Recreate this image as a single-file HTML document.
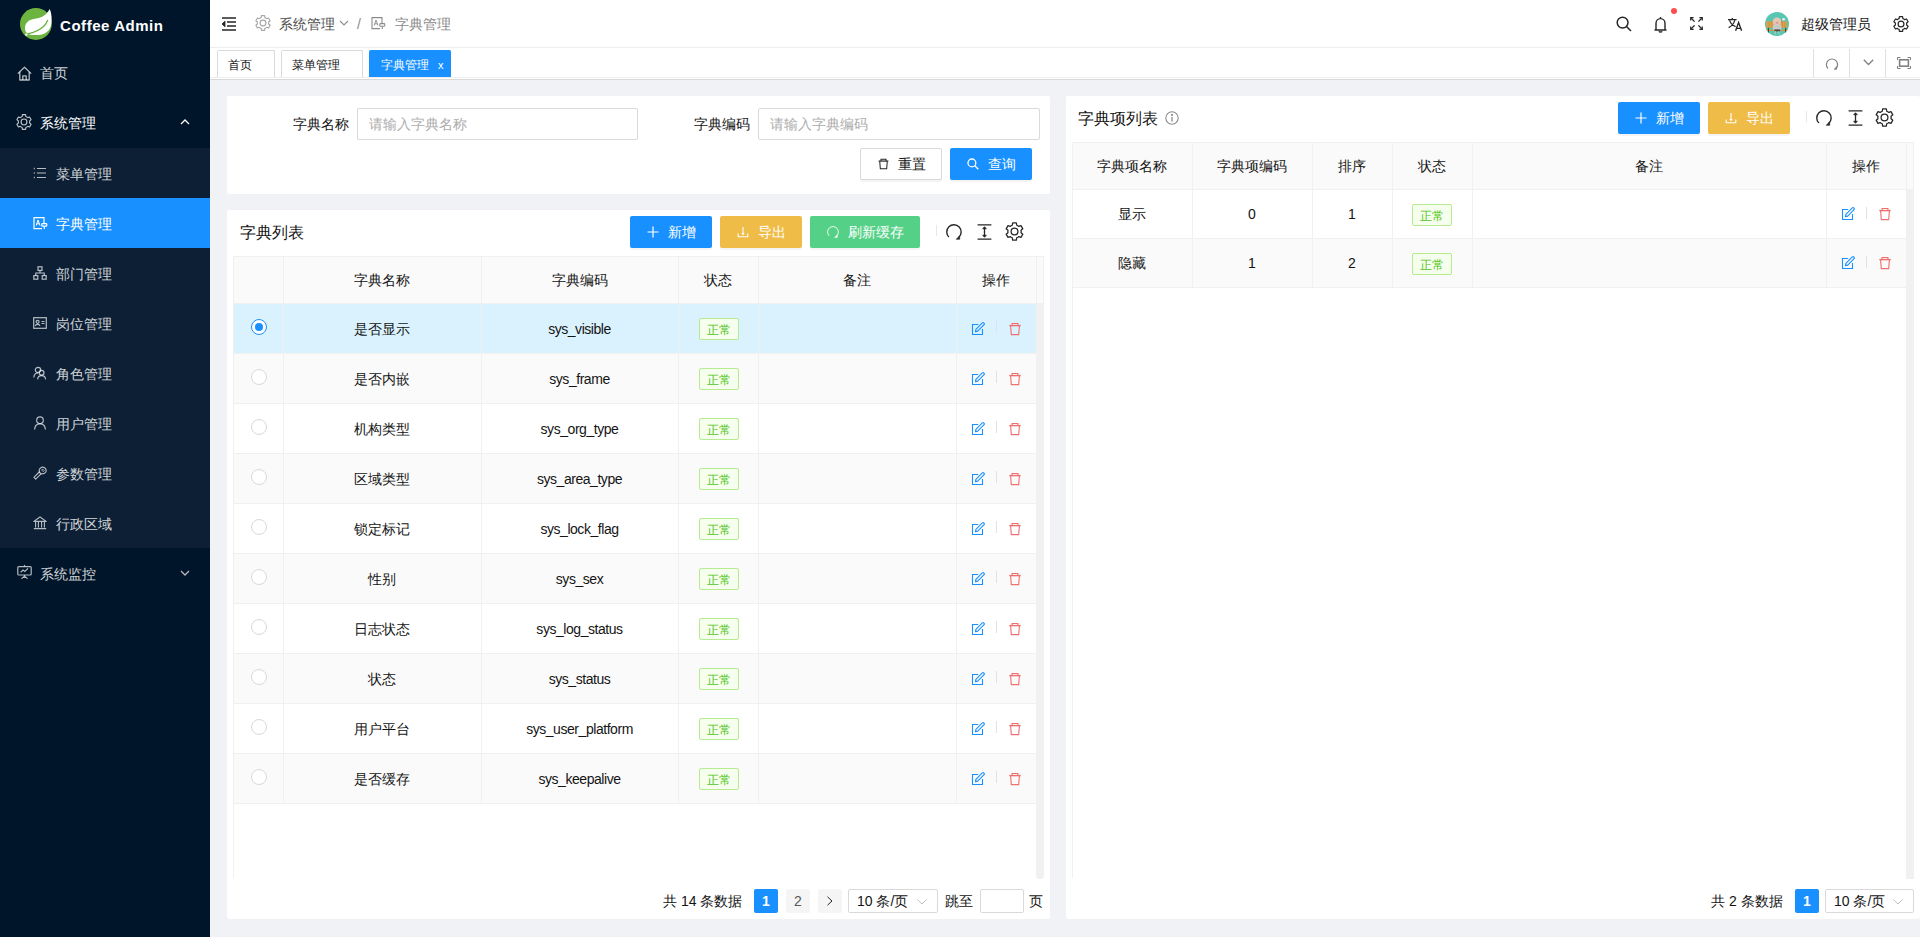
<!DOCTYPE html>
<html><head><meta charset="utf-8">
<style>
*{box-sizing:border-box;margin:0;padding:0}
html,body{width:1920px;height:937px;overflow:hidden}
body{position:relative;background:#f0f2f5;font-family:"Liberation Sans",sans-serif;font-size:14px;color:rgba(0,0,0,.85)}
.abs{position:absolute}
svg{display:block}
/* sidebar */
#side{left:0;top:0;width:210px;height:937px;background:#001529}
.mi{position:absolute;left:0;width:210px;height:50px;color:rgba(255,255,255,.82);font-size:14px}
.mi .ic{position:absolute;top:18px}
.mi .tx{position:absolute;top:1px;line-height:50px}
#sub{position:absolute;left:0;top:148px;width:210px;height:400px;background:#0c1f35}
/* header */
#hdr{left:210px;top:0;width:1710px;height:48px;background:#fff;border-bottom:1px solid #eee}
#tabs{left:210px;top:48px;width:1710px;height:32px;background:#fff;border-bottom:1px solid #d9d9d9}
.tab{position:absolute;top:2px;height:28px;border:1px solid #d9d9d9;border-bottom:none;border-radius:2px 2px 0 0;background:#fff;font-size:12px;line-height:27px;color:#141414}
/* cards */
.card{position:absolute;background:#fff;border-radius:2px}
.lbl{position:absolute;font-size:14px;line-height:22px;color:rgba(0,0,0,.85)}
.inp{position:absolute;height:32px;border:1px solid #d9d9d9;border-radius:2px;background:#fff;color:#acacac;line-height:31px;padding-left:11px;font-size:14px}
.btn{position:absolute;height:32px;border-radius:2px;color:#fff;font-size:14px;line-height:32px}
.btn .ic{position:absolute;top:9px}
.btn .tx{position:absolute;top:0}
table{border-collapse:collapse;table-layout:fixed}
td,th{border:1px solid #f0f0f0;text-align:center;font-weight:normal;color:rgba(0,0,0,.85);font-size:14px}
th{background:#fafafa}
.tag{display:inline-block;width:40px;height:22px;line-height:20px;border:1px solid #b7eb8f;background:#f6ffed;color:#52c41a;font-size:12px;border-radius:2px}
</style></head>
<body>
<div id="side" class="abs">
<svg class="abs" style="left:20px;top:8px" width="32" height="32" viewBox="0 0 32 32">
<circle cx="15.9" cy="16" r="15.9" fill="#6db33f"/>
<path d="M29.8 1.1 C31.8 6 32 12 31.3 16 C30.5 21 28 24.5 22 26.5 C17 27.6 11 27 8.5 26.2 C5.8 25 4.6 22 5 19 C5.6 15 8.5 12 12.5 11.2 C17 10.4 22 9.8 25.5 6.5 C27.2 5 28.6 3 29.8 1.1 Z" fill="#fff"/>
<path d="M7.6 25.8 C14 24.6 20 22 24 18 C25.8 16.2 27 14 27.8 12" stroke="#6db33f" stroke-width="1.3" fill="none"/>
<circle cx="6.3" cy="26.6" r="1.2" fill="#fff"/>
</svg>
<div class="abs" style="left:60px;top:17px;font-size:15px;font-weight:bold;color:#fff;line-height:18px;letter-spacing:.55px">Coffee Admin</div>
<div class="mi" style="top:47px">
 <svg class="ic" style="left:17px;top:66px;top:19px" width="15" height="15" viewBox="0 0 15 15" fill="none" stroke="rgba(255,255,255,.7)" stroke-width="1.3" stroke-linejoin="round"><path d="M0.8 7.6 L7.5 1.2 L14.2 7.6"/><path d="M2.8 5.8 V14 H12.2 V5.8"/><path d="M5.8 14 V9.8 H9.2 V14"/></svg>
 <span class="tx" style="left:40px">首页</span>
</div>
<div class="mi" style="top:97px;color:#fff">
 <span class="ic" style="left:15px;top:16px"><svg width="18" height="18" viewBox="0 0 24 24" fill="none" stroke="#c4c8cc" stroke-width="1.45" stroke-linejoin="round"><path d="M8.20 5.42 L9.45 4.84 L9.90 2.22 L14.10 2.22 L14.55 4.84 L15.80 5.42 L16.93 6.21 L19.42 5.29 L21.52 8.93 L19.47 10.63 L19.60 12.00 L19.47 13.37 L21.52 15.07 L19.42 18.71 L16.93 17.79 L15.80 18.58 L14.55 19.16 L14.10 21.78 L9.90 21.78 L9.45 19.16 L8.20 18.58 L7.07 17.79 L4.58 18.71 L2.48 15.07 L4.53 13.37 L4.40 12.00 L4.53 10.63 L2.48 8.93 L4.58 5.29 L7.07 6.21Z"/><circle cx="12" cy="12" r="3.9"/></svg></span>
 <span class="tx" style="left:40px">系统管理</span>
 <svg class="ic" style="left:180px;top:22px" width="10" height="6" viewBox="0 0 10 6" fill="none" stroke="#fff" stroke-width="1.3"><path d="M1 5 L5 1 L9 5"/></svg>
</div>
<div id="sub">
 <div class="mi" style="top:0">
  <svg class="ic" style="left:33px" width="14" height="14" viewBox="0 0 14 14" fill="none" stroke="rgba(255,255,255,.7)" stroke-width="1.2"><path d="M4 2.5 H13 M4 7 H13 M4 11.5 H13"/><path d="M0.8 2.5 H1.8 M0.8 7 H1.8 M0.8 11.5 H1.8" stroke-width="1.6"/></svg>
  <span class="tx" style="left:56px">菜单管理</span>
 </div>
 <div class="mi" style="top:50px;background:#1890ff;color:#fff">
  <svg class="ic" style="left:33px" width="15" height="14" viewBox="0 0 15 14" fill="none" stroke="#fff" stroke-width="1.2"><path d="M11 7.4 V1.6 H1 V12.6 H9"/><path d="M3.2 9.5 L5 4 L7 9.5 M4 7.8 H6.2" stroke-width="1"/><rect x="8.8" y="7.6" width="5" height="2.6" rx=".8"/><path d="M11.3 10.2 V13"/></svg>
  <span class="tx" style="left:56px">字典管理</span>
 </div>
 <div class="mi" style="top:100px">
  <svg class="ic" style="left:33px" width="14" height="14" viewBox="0 0 14 14" fill="none" stroke="rgba(255,255,255,.7)" stroke-width="1.2"><rect x="5" y="0.8" width="4" height="3.6"/><rect x="0.8" y="9.6" width="4" height="3.6"/><rect x="9.2" y="9.6" width="4" height="3.6"/><path d="M7 4.4 V7 M2.8 9.6 V7 H11.2 V9.6"/></svg>
  <span class="tx" style="left:56px">部门管理</span>
 </div>
 <div class="mi" style="top:150px">
  <svg class="ic" style="left:33px;top:19px" width="14" height="12" viewBox="0 0 14 12" fill="none" stroke="rgba(255,255,255,.7)" stroke-width="1.2"><rect x="0.7" y="0.7" width="12.6" height="10.6"/><circle cx="4.6" cy="4.8" r="1.5"/><path d="M2.3 8.8 C2.6 6.8 6.6 6.8 6.9 8.8 M8.5 4.5 H11.5 M8.5 6.5 H11.5"/></svg>
  <span class="tx" style="left:56px">岗位管理</span>
 </div>
 <div class="mi" style="top:200px">
  <svg class="ic" style="left:33px" width="14" height="14" viewBox="0 0 14 14" fill="none" stroke="rgba(255,255,255,.7)" stroke-width="1.2"><circle cx="5" cy="4" r="2.7"/><path d="M0.8 11.5 C1 8.5 3 7 5 7"/><circle cx="8.6" cy="6.8" r="2.4"/><path d="M4.6 13.4 C4.8 10.8 6.5 9.6 8.6 9.6 C10.7 9.6 12.4 10.8 12.6 13.4"/></svg>
  <span class="tx" style="left:56px">角色管理</span>
 </div>
 <div class="mi" style="top:250px">
  <svg class="ic" style="left:33px" width="14" height="14" viewBox="0 0 14 14" fill="none" stroke="rgba(255,255,255,.7)" stroke-width="1.2"><circle cx="7" cy="4.2" r="3.3"/><path d="M1.6 13.5 C1.8 9.8 4.2 7.8 7 7.8 C9.8 7.8 12.2 9.8 12.4 13.5"/></svg>
  <span class="tx" style="left:56px">用户管理</span>
 </div>
 <div class="mi" style="top:300px">
  <svg class="ic" style="left:33px" width="14" height="14" viewBox="0 0 14 14" fill="none" stroke="rgba(255,255,255,.7)" stroke-width="1.1" stroke-linejoin="round"><path d="M0.9 11.3 L6.2 6 L8 7.8 L2.7 13.1 Z"/><path d="M6.9 6.6 A3.4 3.4 0 1 1 12.6 6.4"/><path d="M12.6 6.4 C11.8 7.6 10.4 8 8 7.8"/><path d="M9.6 3 L11.2 4.6 L10.2 5.6 L8.6 4 Z" stroke-width="0.9"/></svg>
  <span class="tx" style="left:56px">参数管理</span>
 </div>
 <div class="mi" style="top:350px">
  <svg class="ic" style="left:33px" width="14" height="14" viewBox="0 0 14 14" fill="none" stroke="rgba(255,255,255,.7)" stroke-width="1.1" stroke-linejoin="round"><path d="M0.8 5.4 L7 1 L13.2 5.4 Z"/><path d="M2.6 6 V11.6 M5.4 6 V11.6 M8.6 6 V11.6 M11.4 6 V11.6"/><path d="M0.8 12.6 H13.2" stroke-width="1.3"/></svg>
  <span class="tx" style="left:56px">行政区域</span>
 </div>
</div>
<div class="mi" style="top:548px">
 <svg class="ic" style="left:17px;top:17px" width="15" height="14" viewBox="0 0 15 14" fill="none" stroke="rgba(255,255,255,.7)" stroke-width="1.2"><path d="M7.5 0 V1.2"/><rect x="0.8" y="1.6" width="13.4" height="8.4" rx="1"/><path d="M3.6 7.4 L6 5 L7.8 6.4 L11 3.4"/><path d="M7.5 10 V11.2 M4.4 13.6 L7.5 11.2 L10.6 13.6"/></svg>
 <span class="tx" style="left:40px">系统监控</span>
 <svg class="ic" style="left:180px;top:22px" width="10" height="6" viewBox="0 0 10 6" fill="none" stroke="rgba(255,255,255,.7)" stroke-width="1.3"><path d="M1 1 L5 5 L9 1"/></svg>
</div>
</div>
<div id="hdr" class="abs">
<svg class="abs" style="left:11px;top:17px" width="16" height="14" viewBox="0 0 16 14" fill="none" stroke="#262626" stroke-width="1.35"><path d="M1 1 H15 M6 5 H15 M6 9 H15 M1 13 H15"/><path d="M4 4.2 L1 7 L4 9.8 Z" fill="#262626" stroke-width="0.8"/></svg>
<svg class="abs" style="left:44px;top:14px" width="18" height="18" viewBox="0 0 24 24" fill="none" stroke="#a6a6a6" stroke-width="1.5" stroke-linejoin="round"><path d="M8.20 5.42 L9.45 4.84 L9.90 2.22 L14.10 2.22 L14.55 4.84 L15.80 5.42 L16.93 6.21 L19.42 5.29 L21.52 8.93 L19.47 10.63 L19.60 12.00 L19.47 13.37 L21.52 15.07 L19.42 18.71 L16.93 17.79 L15.80 18.58 L14.55 19.16 L14.10 21.78 L9.90 21.78 L9.45 19.16 L8.20 18.58 L7.07 17.79 L4.58 18.71 L2.48 15.07 L4.53 13.37 L4.40 12.00 L4.53 10.63 L2.48 8.93 L4.58 5.29 L7.07 6.21Z"/><circle cx="12" cy="12" r="3.9"/></svg>
<div class="abs" style="left:69px;top:13px;line-height:22px;color:#4d4d4d">系统管理</div>
<svg class="abs" style="left:129px;top:20px" width="10" height="6" viewBox="0 0 10 6" fill="none" stroke="#8c8c8c" stroke-width="1.1"><path d="M1 1 L5 5 L9 1"/></svg>
<div class="abs" style="left:147px;top:13px;line-height:22px;color:#8c8c8c">/</div>
<svg class="abs" style="left:161px;top:16px" width="15" height="14" viewBox="0 0 15 14" fill="none" stroke="#8c8c8c" stroke-width="1.1"><path d="M11 7.4 V1.6 H1 V12.6 H9"/><path d="M3.2 9.5 L5 4 L7 9.5 M4 7.8 H6.2" stroke-width="0.9"/><rect x="8.8" y="7.6" width="5" height="2.6" rx=".8"/><path d="M11.3 10.2 V13"/></svg>
<div class="abs" style="left:185px;top:13px;line-height:22px;color:#8a8a8a">字典管理</div>
<svg class="abs" style="left:1406px;top:16px" width="16" height="16" viewBox="0 0 16 16" fill="none" stroke="#262626" stroke-width="1.5"><circle cx="6.6" cy="6.6" r="5.4"/><path d="M10.5 10.5 L15 15"/></svg>
<svg class="abs" style="left:1444px;top:16px" width="13" height="17" viewBox="0 0 13 17" fill="none" stroke="#262626" stroke-width="1.4" stroke-linejoin="round"><path d="M6.5 1 V2 M2 14 V7.5 C2 4.5 4 2.6 6.5 2.6 C9 2.6 11 4.5 11 7.5 V14 M0.5 14 H12.5"/><path d="M5 15.2 C5.4 16.3 7.6 16.3 8 15.2" /></svg>
<span class="abs" style="left:1461px;top:8px;width:6px;height:6px;border-radius:50%;background:#ff4d4f"></span>
<svg class="abs" style="left:1480px;top:17px" width="13" height="13" viewBox="0 0 13 13" fill="none" stroke="#262626" stroke-width="1.3"><path d="M1.2 1.2 L4.6 4.6 M11.8 1.2 L8.4 4.6 M1.2 11.8 L4.6 8.4 M11.8 11.8 L8.4 8.4"/><path d="M0.7 3.6 V0.7 H3.6 M9.4 0.7 H12.3 V3.6 M0.7 9.4 V12.3 H3.6 M9.4 12.3 H12.3 V9.4" stroke-width="1.2"/></svg>
<svg class="abs" style="left:1518px;top:18px" width="15" height="13" viewBox="0 0 15 13" fill="none" stroke="#262626" stroke-width="1.25"><path d="M0 1.6 H8.6 M4.3 0 V1.6 M1.6 2.4 C2.6 5.6 4.8 7.6 7.6 8.6 M6.8 2.4 C5.8 5.6 3.8 8.2 0.6 9.6"/><path d="M7.6 12.8 L10.6 4.4 L13.6 12.8 M8.6 10.4 H12.6" stroke-width="1.35"/></svg>
<svg class="abs" style="left:1555px;top:12px" width="24" height="24" viewBox="0 0 24 24"><defs><clipPath id="av"><circle cx="12" cy="12" r="12"/></clipPath></defs><g clip-path="url(#av)"><rect width="24" height="24" fill="#58c6b3"/><rect x="1.1" y="9.3" width="21.2" height="6.5" fill="#d6a24e"/><path d="M4 9.3 V15.8 M6.5 9.3 V15.8 M17.5 9.3 V15.8 M20 9.3 V15.8" stroke="#c08a3a" stroke-width=".5"/><rect x="1.5" y="17.6" width="21" height="1.4" fill="#cf9843"/><path d="M3.4 15.8 V21 M20.7 15.8 V21" stroke="#3d3a35" stroke-width="1"/><ellipse cx="9" cy="9.5" rx="1.4" ry="1.6" fill="#a5705a"/><ellipse cx="15.5" cy="9.5" rx="1.4" ry="1.6" fill="#a5705a"/><ellipse cx="12" cy="9.6" rx="4.3" ry="4" fill="#e9c6b4"/><ellipse cx="12.1" cy="10.8" rx="1.6" ry="1" fill="#d99a94"/><rect x="7.8" y="12.6" width="8.6" height="5.4" rx="1.5" fill="#c9c9c9"/><rect x="9.5" y="17.4" width="5.6" height="2" fill="#5b4a3e"/><path d="M10.4 19.2 V22 M13.8 19.2 V22" stroke="#cfc7c0" stroke-width="1"/><circle cx="18.6" cy="7.2" r="1.3" fill="#eef2ef"/></g></svg>
<div class="abs" style="left:1591px;top:13px;line-height:22px;color:#141414">超级管理员</div>
<svg class="abs" style="left:1682px;top:15px" width="18" height="18" viewBox="0 0 24 24" fill="none" stroke="#262626" stroke-width="1.6" stroke-linejoin="round"><path d="M8.20 5.42 L9.45 4.84 L9.90 2.22 L14.10 2.22 L14.55 4.84 L15.80 5.42 L16.93 6.21 L19.42 5.29 L21.52 8.93 L19.47 10.63 L19.60 12.00 L19.47 13.37 L21.52 15.07 L19.42 18.71 L16.93 17.79 L15.80 18.58 L14.55 19.16 L14.10 21.78 L9.90 21.78 L9.45 19.16 L8.20 18.58 L7.07 17.79 L4.58 18.71 L2.48 15.07 L4.53 13.37 L4.40 12.00 L4.53 10.63 L2.48 8.93 L4.58 5.29 L7.07 6.21Z"/><circle cx="12" cy="12" r="3.9"/></svg>
</div>
<div id="tabs" class="abs">
<div class="tab" style="left:7px;width:58px"><span class="abs" style="left:10px;top:1px">首页</span></div>
<div class="tab" style="left:71px;width:82px"><span class="abs" style="left:10px;top:1px">菜单管理</span></div>
<div class="tab" style="left:159px;width:82px;background:#1890ff;border-color:#1890ff;color:#fff"><span class="abs" style="left:11px;top:1px">字典管理</span><span class="abs" style="left:68px;top:1px;font-size:11px">x</span></div>
<div class="abs" style="left:0;top:29px;width:1710px;height:1px;background:#eee"></div>
<div class="abs" style="left:1603px;top:1px;width:1px;height:28px;background:#e0e0e0"></div>
<div class="abs" style="left:1639px;top:1px;width:1px;height:28px;background:#e0e0e0"></div>
<div class="abs" style="left:1675px;top:1px;width:1px;height:28px;background:#e0e0e0"></div>
<svg class="abs" style="left:1615px;top:9px" width="14" height="14" viewBox="0 0 14 14" fill="none" stroke="#808080" stroke-width="1.2"><path d="M3 11.5 A5.6 5.6 0 1 1 11 11.5"/><path d="M9.2 12.2 L11.4 12 L11.5 9.6" fill="#808080"/></svg>
<svg class="abs" style="left:1653px;top:11px" width="11" height="7" viewBox="0 0 11 7" fill="none" stroke="#808080" stroke-width="1.3"><path d="M0.8 0.8 L5.5 5.5 L10.2 0.8"/></svg>
<svg class="abs" style="left:1687px;top:9px" width="14" height="12" viewBox="0 0 14 12" fill="none" stroke="#808080" stroke-width="1"><path d="M0.5 3 V0.5 H3.5 M10.5 0.5 H13.5 V3 M0.5 9 V11.5 H3.5 M10.5 11.5 H13.5 V9"/><rect x="2.6" y="2.8" width="8.8" height="6.4" stroke-width="1.6"/></svg>
</div>
<!--CARDS--><div class="card" style="left:227px;top:96px;width:823px;height:98px"></div>
<div class="abs" style="left:293px;top:113px;font-size:14px;line-height:22px;color:#141414;white-space:nowrap;">字典名称</div>
<div class="inp" style="left:357px;top:108px;width:281px">请输入字典名称</div>
<div class="abs" style="left:694px;top:113px;font-size:14px;line-height:22px;color:#141414;white-space:nowrap;">字典编码</div>
<div class="inp" style="left:758px;top:108px;width:282px">请输入字典编码</div>
<div class="btn" style="left:860px;top:148px;width:82px;background:#fff;border:1px solid #d9d9d9;color:#141414;box-shadow:0 2px 0 rgba(0,0,0,.045)"><svg class="abs" style="left:17px;top:9px" width="11" height="12" viewBox="0 0 12 14" fill="none" stroke="#262626" stroke-width="1.2"><path d="M0.3 3.6 H11.7" stroke-width="1.4"/><path d="M3.1 3.4 V1.5 H8.9 V3.4 M1.6 3.8 L2.3 12.6 H9.7 L10.4 3.8"/></svg><span class="tx" style="left:37px;top:-1px">重置</span></div>
<div class="btn" style="left:950px;top:148px;width:82px;background:#1890ff;color:#fff;box-shadow:0 2px 0 rgba(0,0,0,.045)"><svg class="abs" style="left:17px;top:10px" width="12" height="12" viewBox="0 0 12 12" fill="none" stroke="#fff" stroke-width="1.3"><circle cx="4.9" cy="4.9" r="3.9"/><path d="M7.8 7.8 L11.3 11.3"/></svg><span class="tx" style="left:38px;top:0px">查询</span></div>
<div class="card" style="left:227px;top:210px;width:823px;height:709px"></div>
<div class="abs" style="left:240px;top:222px;font-size:16px;line-height:22px;color:#141414;white-space:nowrap;line-height:22px">字典列表</div>
<div class="btn" style="left:630px;top:216px;width:82px;background:#1890ff;color:#fff;box-shadow:0 2px 0 rgba(0,0,0,.045)"><svg class="abs" style="left:17px;top:10px" width="12" height="12" viewBox="0 0 12 12" stroke="#fff" stroke-width="1.2"><path d="M6 0.5 V11.5 M0.5 6 H11.5"/></svg><span class="tx" style="left:38px;top:0px">新增</span></div>
<div class="btn" style="left:720px;top:216px;width:82px;background:#efbd47;color:#fff;box-shadow:0 2px 0 rgba(0,0,0,.045)"><svg class="abs" style="left:17px;top:10px" width="12" height="12" viewBox="0 0 12 12" fill="none" stroke="#fff" stroke-width="1.1"><path d="M6 1 V8.4 M4.8 7.2 L6 8.4 L7.2 7.2 M1.2 7.6 V10.8 H10.8 V7.6"/></svg><span class="tx" style="left:38px;top:0px">导出</span></div>
<div class="btn" style="left:810px;top:216px;width:110px;background:#55d187;color:#fff;box-shadow:0 2px 0 rgba(0,0,0,.045)"><svg class="abs" style="left:17px;top:10px" width="12" height="12" viewBox="0 0 16 16" fill="none" stroke="#fff" stroke-width="1.2"><path d="M2.9 13.1 A7.2 7.2 0 1 1 12.8 13.3"/><path d="M10.2 15.3 L13.7 15.3 L13.7 11.7 Z" fill="#fff" stroke-width="0.6" stroke-linejoin="miter"/></svg><span class="tx" style="left:38px;top:0px">刷新缓存</span></div>
<div class="abs" style="left:936px;top:225px;width:1px;height:11px;background:#e8e8e8"></div>
<svg class="abs" style="left:946px;top:224px" width="16" height="16" viewBox="0 0 16 16" fill="none" stroke="#262626" stroke-width="1.4"><path d="M2.9 13.1 A7.2 7.2 0 1 1 12.8 13.3"/><path d="M10.2 15.3 L13.7 15.3 L13.7 11.7 Z" fill="#262626" stroke-width="0.6" stroke-linejoin="miter"/></svg>
<svg class="abs" style="left:977px;top:224px" width="15" height="16" viewBox="0 0 15 16" fill="none" stroke="#262626" stroke-width="1.3"><path d="M0.6 0.9 H14.4 M0.6 15.1 H14.4 M7.5 3 V13"/><path d="M5.6 4.8 L7.5 2.7 L9.4 4.8 Z M5.6 11.2 L7.5 13.3 L9.4 11.2 Z" fill="#262626" stroke-width="0.7"/></svg>
<svg class="abs" style="left:1004px;top:221px" width="21" height="21" viewBox="0 0 24 24" fill="none" stroke="#262626" stroke-width="1.45" stroke-linejoin="round"><path d="M8.20 5.42 L9.45 4.84 L9.90 2.22 L14.10 2.22 L14.55 4.84 L15.80 5.42 L16.93 6.21 L19.42 5.29 L21.52 8.93 L19.47 10.63 L19.60 12.00 L19.47 13.37 L21.52 15.07 L19.42 18.71 L16.93 17.79 L15.80 18.58 L14.55 19.16 L14.10 21.78 L9.90 21.78 L9.45 19.16 L8.20 18.58 L7.07 17.79 L4.58 18.71 L2.48 15.07 L4.53 13.37 L4.40 12.00 L4.53 10.63 L2.48 8.93 L4.58 5.29 L7.07 6.21Z"/><circle cx="12" cy="12" r="3.9"/></svg>
<div class="abs" style="left:233px;top:256px;width:811px;height:47px;background:#fafafa"></div>
<div class="abs" style="left:233px;top:303px;width:803px;height:50px;background:#daf2fe"></div>
<div class="abs" style="left:233px;top:353px;width:803px;height:50px;background:#fafafa"></div>
<div class="abs" style="left:233px;top:403px;width:803px;height:50px;background:#fff"></div>
<div class="abs" style="left:233px;top:453px;width:803px;height:50px;background:#fafafa"></div>
<div class="abs" style="left:233px;top:503px;width:803px;height:50px;background:#fff"></div>
<div class="abs" style="left:233px;top:553px;width:803px;height:50px;background:#fafafa"></div>
<div class="abs" style="left:233px;top:603px;width:803px;height:50px;background:#fff"></div>
<div class="abs" style="left:233px;top:653px;width:803px;height:50px;background:#fafafa"></div>
<div class="abs" style="left:233px;top:703px;width:803px;height:50px;background:#fff"></div>
<div class="abs" style="left:233px;top:753px;width:803px;height:50px;background:#fafafa"></div>
<div class="abs" style="left:1036px;top:303px;width:8px;height:576px;background:#f1f1f1;border-radius:0 0 3px 3px"></div>
<div class="abs" style="left:233px;top:256px;width:811px;height:1px;background:#f0f0f0"></div>
<div class="abs" style="left:233px;top:303px;width:811px;height:1px;background:#f0f0f0"></div>
<div class="abs" style="left:233px;top:353px;width:803px;height:1px;background:#f0f0f0"></div>
<div class="abs" style="left:233px;top:403px;width:803px;height:1px;background:#f0f0f0"></div>
<div class="abs" style="left:233px;top:453px;width:803px;height:1px;background:#f0f0f0"></div>
<div class="abs" style="left:233px;top:503px;width:803px;height:1px;background:#f0f0f0"></div>
<div class="abs" style="left:233px;top:553px;width:803px;height:1px;background:#f0f0f0"></div>
<div class="abs" style="left:233px;top:603px;width:803px;height:1px;background:#f0f0f0"></div>
<div class="abs" style="left:233px;top:653px;width:803px;height:1px;background:#f0f0f0"></div>
<div class="abs" style="left:233px;top:703px;width:803px;height:1px;background:#f0f0f0"></div>
<div class="abs" style="left:233px;top:753px;width:803px;height:1px;background:#f0f0f0"></div>
<div class="abs" style="left:233px;top:803px;width:803px;height:1px;background:#f0f0f0"></div>
<div class="abs" style="left:233px;top:256px;width:1px;height:622px;background:#f0f0f0"></div>
<div class="abs" style="left:283px;top:256px;width:1px;height:547px;background:#f0f0f0"></div>
<div class="abs" style="left:481px;top:256px;width:1px;height:547px;background:#f0f0f0"></div>
<div class="abs" style="left:678px;top:256px;width:1px;height:547px;background:#f0f0f0"></div>
<div class="abs" style="left:758px;top:256px;width:1px;height:547px;background:#f0f0f0"></div>
<div class="abs" style="left:956px;top:256px;width:1px;height:547px;background:#f0f0f0"></div>
<div class="abs" style="left:1036px;top:256px;width:1px;height:547px;background:#f0f0f0"></div>
<div class="abs" style="left:1043px;top:256px;width:1px;height:47px;background:#f0f0f0"></div>
<div class="abs" style="left:282.0px;top:269.0px;width:200px;text-align:center;font-size:14px;line-height:22px;color:#141414;white-space:nowrap;">字典名称</div>
<div class="abs" style="left:479.5px;top:269.0px;width:200px;text-align:center;font-size:14px;line-height:22px;color:#141414;white-space:nowrap;">字典编码</div>
<div class="abs" style="left:618.0px;top:269.0px;width:200px;text-align:center;font-size:14px;line-height:22px;color:#141414;white-space:nowrap;">状态</div>
<div class="abs" style="left:757.0px;top:269.0px;width:200px;text-align:center;font-size:14px;line-height:22px;color:#141414;white-space:nowrap;">备注</div>
<div class="abs" style="left:896.0px;top:269.0px;width:200px;text-align:center;font-size:14px;line-height:22px;color:#141414;white-space:nowrap;">操作</div>
<div class="abs" style="left:251px;top:319.0px;width:16px;height:16px;border:1px solid #1890ff;border-radius:50%;background:#fff"><div class="abs" style="left:3px;top:3px;width:8px;height:8px;border-radius:50%;background:#1890ff"></div></div>
<div class="abs" style="left:282.0px;top:318.0px;width:200px;text-align:center;font-size:14px;line-height:22px;color:#141414;white-space:nowrap;">是否显示</div>
<div class="abs" style="left:479.5px;top:318.0px;width:200px;text-align:center;font-size:14px;line-height:22px;color:#141414;white-space:nowrap;letter-spacing:-.45px">sys_visible</div>
<div class="abs" style="left:699.0px;top:318.0px;width:40px;height:22px;border:1px solid #b7eb8f;background:#f6ffed;border-radius:2px;color:#52c41a;font-size:12px;line-height:22px;text-align:center">正常</div>
<svg class="abs" style="left:971px;top:322.0px" width="14" height="14" viewBox="0 0 14 14" fill="none" stroke="#1890ff" stroke-width="1.1"><path d="M7.2 2.5 H1.5 V12.5 H11.5 V7"/><path d="M4.5 9.6 L4.9 7.3 L11.3 0.9 A1.3 1.3 0 0 1 13.1 2.7 L6.7 9.1 Z" stroke-linejoin="round"/></svg>
<div class="abs" style="left:996px;top:321.0px;width:1px;height:12px;background:#dde3e8"></div>
<svg class="abs" style="left:1009px;top:322.0px" width="12" height="14" viewBox="0 0 12 14" fill="none" stroke="#ed6f6f" stroke-width="1.1"><path d="M0.3 3.6 H11.7" stroke-width="1.4"/><path d="M3.1 3.4 V1.5 H8.9 V3.4 M1.6 3.8 L2.3 12.6 H9.7 L10.4 3.8"/></svg>
<div class="abs" style="left:251px;top:369.0px;width:16px;height:16px;border:1px solid #d9d9d9;border-radius:50%;background:#fff"></div>
<div class="abs" style="left:282.0px;top:368.0px;width:200px;text-align:center;font-size:14px;line-height:22px;color:#141414;white-space:nowrap;">是否内嵌</div>
<div class="abs" style="left:479.5px;top:368.0px;width:200px;text-align:center;font-size:14px;line-height:22px;color:#141414;white-space:nowrap;letter-spacing:-.45px">sys_frame</div>
<div class="abs" style="left:699.0px;top:368.0px;width:40px;height:22px;border:1px solid #b7eb8f;background:#f6ffed;border-radius:2px;color:#52c41a;font-size:12px;line-height:22px;text-align:center">正常</div>
<svg class="abs" style="left:971px;top:372.0px" width="14" height="14" viewBox="0 0 14 14" fill="none" stroke="#1890ff" stroke-width="1.1"><path d="M7.2 2.5 H1.5 V12.5 H11.5 V7"/><path d="M4.5 9.6 L4.9 7.3 L11.3 0.9 A1.3 1.3 0 0 1 13.1 2.7 L6.7 9.1 Z" stroke-linejoin="round"/></svg>
<div class="abs" style="left:996px;top:371.0px;width:1px;height:12px;background:#dde3e8"></div>
<svg class="abs" style="left:1009px;top:372.0px" width="12" height="14" viewBox="0 0 12 14" fill="none" stroke="#ed6f6f" stroke-width="1.1"><path d="M0.3 3.6 H11.7" stroke-width="1.4"/><path d="M3.1 3.4 V1.5 H8.9 V3.4 M1.6 3.8 L2.3 12.6 H9.7 L10.4 3.8"/></svg>
<div class="abs" style="left:251px;top:419.0px;width:16px;height:16px;border:1px solid #d9d9d9;border-radius:50%;background:#fff"></div>
<div class="abs" style="left:282.0px;top:418.0px;width:200px;text-align:center;font-size:14px;line-height:22px;color:#141414;white-space:nowrap;">机构类型</div>
<div class="abs" style="left:479.5px;top:418.0px;width:200px;text-align:center;font-size:14px;line-height:22px;color:#141414;white-space:nowrap;letter-spacing:-.45px">sys_org_type</div>
<div class="abs" style="left:699.0px;top:418.0px;width:40px;height:22px;border:1px solid #b7eb8f;background:#f6ffed;border-radius:2px;color:#52c41a;font-size:12px;line-height:22px;text-align:center">正常</div>
<svg class="abs" style="left:971px;top:422.0px" width="14" height="14" viewBox="0 0 14 14" fill="none" stroke="#1890ff" stroke-width="1.1"><path d="M7.2 2.5 H1.5 V12.5 H11.5 V7"/><path d="M4.5 9.6 L4.9 7.3 L11.3 0.9 A1.3 1.3 0 0 1 13.1 2.7 L6.7 9.1 Z" stroke-linejoin="round"/></svg>
<div class="abs" style="left:996px;top:421.0px;width:1px;height:12px;background:#dde3e8"></div>
<svg class="abs" style="left:1009px;top:422.0px" width="12" height="14" viewBox="0 0 12 14" fill="none" stroke="#ed6f6f" stroke-width="1.1"><path d="M0.3 3.6 H11.7" stroke-width="1.4"/><path d="M3.1 3.4 V1.5 H8.9 V3.4 M1.6 3.8 L2.3 12.6 H9.7 L10.4 3.8"/></svg>
<div class="abs" style="left:251px;top:469.0px;width:16px;height:16px;border:1px solid #d9d9d9;border-radius:50%;background:#fff"></div>
<div class="abs" style="left:282.0px;top:468.0px;width:200px;text-align:center;font-size:14px;line-height:22px;color:#141414;white-space:nowrap;">区域类型</div>
<div class="abs" style="left:479.5px;top:468.0px;width:200px;text-align:center;font-size:14px;line-height:22px;color:#141414;white-space:nowrap;letter-spacing:-.45px">sys_area_type</div>
<div class="abs" style="left:699.0px;top:468.0px;width:40px;height:22px;border:1px solid #b7eb8f;background:#f6ffed;border-radius:2px;color:#52c41a;font-size:12px;line-height:22px;text-align:center">正常</div>
<svg class="abs" style="left:971px;top:472.0px" width="14" height="14" viewBox="0 0 14 14" fill="none" stroke="#1890ff" stroke-width="1.1"><path d="M7.2 2.5 H1.5 V12.5 H11.5 V7"/><path d="M4.5 9.6 L4.9 7.3 L11.3 0.9 A1.3 1.3 0 0 1 13.1 2.7 L6.7 9.1 Z" stroke-linejoin="round"/></svg>
<div class="abs" style="left:996px;top:471.0px;width:1px;height:12px;background:#dde3e8"></div>
<svg class="abs" style="left:1009px;top:472.0px" width="12" height="14" viewBox="0 0 12 14" fill="none" stroke="#ed6f6f" stroke-width="1.1"><path d="M0.3 3.6 H11.7" stroke-width="1.4"/><path d="M3.1 3.4 V1.5 H8.9 V3.4 M1.6 3.8 L2.3 12.6 H9.7 L10.4 3.8"/></svg>
<div class="abs" style="left:251px;top:519.0px;width:16px;height:16px;border:1px solid #d9d9d9;border-radius:50%;background:#fff"></div>
<div class="abs" style="left:282.0px;top:518.0px;width:200px;text-align:center;font-size:14px;line-height:22px;color:#141414;white-space:nowrap;">锁定标记</div>
<div class="abs" style="left:479.5px;top:518.0px;width:200px;text-align:center;font-size:14px;line-height:22px;color:#141414;white-space:nowrap;letter-spacing:-.45px">sys_lock_flag</div>
<div class="abs" style="left:699.0px;top:518.0px;width:40px;height:22px;border:1px solid #b7eb8f;background:#f6ffed;border-radius:2px;color:#52c41a;font-size:12px;line-height:22px;text-align:center">正常</div>
<svg class="abs" style="left:971px;top:522.0px" width="14" height="14" viewBox="0 0 14 14" fill="none" stroke="#1890ff" stroke-width="1.1"><path d="M7.2 2.5 H1.5 V12.5 H11.5 V7"/><path d="M4.5 9.6 L4.9 7.3 L11.3 0.9 A1.3 1.3 0 0 1 13.1 2.7 L6.7 9.1 Z" stroke-linejoin="round"/></svg>
<div class="abs" style="left:996px;top:521.0px;width:1px;height:12px;background:#dde3e8"></div>
<svg class="abs" style="left:1009px;top:522.0px" width="12" height="14" viewBox="0 0 12 14" fill="none" stroke="#ed6f6f" stroke-width="1.1"><path d="M0.3 3.6 H11.7" stroke-width="1.4"/><path d="M3.1 3.4 V1.5 H8.9 V3.4 M1.6 3.8 L2.3 12.6 H9.7 L10.4 3.8"/></svg>
<div class="abs" style="left:251px;top:569.0px;width:16px;height:16px;border:1px solid #d9d9d9;border-radius:50%;background:#fff"></div>
<div class="abs" style="left:282.0px;top:568.0px;width:200px;text-align:center;font-size:14px;line-height:22px;color:#141414;white-space:nowrap;">性别</div>
<div class="abs" style="left:479.5px;top:568.0px;width:200px;text-align:center;font-size:14px;line-height:22px;color:#141414;white-space:nowrap;letter-spacing:-.45px">sys_sex</div>
<div class="abs" style="left:699.0px;top:568.0px;width:40px;height:22px;border:1px solid #b7eb8f;background:#f6ffed;border-radius:2px;color:#52c41a;font-size:12px;line-height:22px;text-align:center">正常</div>
<svg class="abs" style="left:971px;top:572.0px" width="14" height="14" viewBox="0 0 14 14" fill="none" stroke="#1890ff" stroke-width="1.1"><path d="M7.2 2.5 H1.5 V12.5 H11.5 V7"/><path d="M4.5 9.6 L4.9 7.3 L11.3 0.9 A1.3 1.3 0 0 1 13.1 2.7 L6.7 9.1 Z" stroke-linejoin="round"/></svg>
<div class="abs" style="left:996px;top:571.0px;width:1px;height:12px;background:#dde3e8"></div>
<svg class="abs" style="left:1009px;top:572.0px" width="12" height="14" viewBox="0 0 12 14" fill="none" stroke="#ed6f6f" stroke-width="1.1"><path d="M0.3 3.6 H11.7" stroke-width="1.4"/><path d="M3.1 3.4 V1.5 H8.9 V3.4 M1.6 3.8 L2.3 12.6 H9.7 L10.4 3.8"/></svg>
<div class="abs" style="left:251px;top:619.0px;width:16px;height:16px;border:1px solid #d9d9d9;border-radius:50%;background:#fff"></div>
<div class="abs" style="left:282.0px;top:618.0px;width:200px;text-align:center;font-size:14px;line-height:22px;color:#141414;white-space:nowrap;">日志状态</div>
<div class="abs" style="left:479.5px;top:618.0px;width:200px;text-align:center;font-size:14px;line-height:22px;color:#141414;white-space:nowrap;letter-spacing:-.45px">sys_log_status</div>
<div class="abs" style="left:699.0px;top:618.0px;width:40px;height:22px;border:1px solid #b7eb8f;background:#f6ffed;border-radius:2px;color:#52c41a;font-size:12px;line-height:22px;text-align:center">正常</div>
<svg class="abs" style="left:971px;top:622.0px" width="14" height="14" viewBox="0 0 14 14" fill="none" stroke="#1890ff" stroke-width="1.1"><path d="M7.2 2.5 H1.5 V12.5 H11.5 V7"/><path d="M4.5 9.6 L4.9 7.3 L11.3 0.9 A1.3 1.3 0 0 1 13.1 2.7 L6.7 9.1 Z" stroke-linejoin="round"/></svg>
<div class="abs" style="left:996px;top:621.0px;width:1px;height:12px;background:#dde3e8"></div>
<svg class="abs" style="left:1009px;top:622.0px" width="12" height="14" viewBox="0 0 12 14" fill="none" stroke="#ed6f6f" stroke-width="1.1"><path d="M0.3 3.6 H11.7" stroke-width="1.4"/><path d="M3.1 3.4 V1.5 H8.9 V3.4 M1.6 3.8 L2.3 12.6 H9.7 L10.4 3.8"/></svg>
<div class="abs" style="left:251px;top:669.0px;width:16px;height:16px;border:1px solid #d9d9d9;border-radius:50%;background:#fff"></div>
<div class="abs" style="left:282.0px;top:668.0px;width:200px;text-align:center;font-size:14px;line-height:22px;color:#141414;white-space:nowrap;">状态</div>
<div class="abs" style="left:479.5px;top:668.0px;width:200px;text-align:center;font-size:14px;line-height:22px;color:#141414;white-space:nowrap;letter-spacing:-.45px">sys_status</div>
<div class="abs" style="left:699.0px;top:668.0px;width:40px;height:22px;border:1px solid #b7eb8f;background:#f6ffed;border-radius:2px;color:#52c41a;font-size:12px;line-height:22px;text-align:center">正常</div>
<svg class="abs" style="left:971px;top:672.0px" width="14" height="14" viewBox="0 0 14 14" fill="none" stroke="#1890ff" stroke-width="1.1"><path d="M7.2 2.5 H1.5 V12.5 H11.5 V7"/><path d="M4.5 9.6 L4.9 7.3 L11.3 0.9 A1.3 1.3 0 0 1 13.1 2.7 L6.7 9.1 Z" stroke-linejoin="round"/></svg>
<div class="abs" style="left:996px;top:671.0px;width:1px;height:12px;background:#dde3e8"></div>
<svg class="abs" style="left:1009px;top:672.0px" width="12" height="14" viewBox="0 0 12 14" fill="none" stroke="#ed6f6f" stroke-width="1.1"><path d="M0.3 3.6 H11.7" stroke-width="1.4"/><path d="M3.1 3.4 V1.5 H8.9 V3.4 M1.6 3.8 L2.3 12.6 H9.7 L10.4 3.8"/></svg>
<div class="abs" style="left:251px;top:719.0px;width:16px;height:16px;border:1px solid #d9d9d9;border-radius:50%;background:#fff"></div>
<div class="abs" style="left:282.0px;top:718.0px;width:200px;text-align:center;font-size:14px;line-height:22px;color:#141414;white-space:nowrap;">用户平台</div>
<div class="abs" style="left:479.5px;top:718.0px;width:200px;text-align:center;font-size:14px;line-height:22px;color:#141414;white-space:nowrap;letter-spacing:-.45px">sys_user_platform</div>
<div class="abs" style="left:699.0px;top:718.0px;width:40px;height:22px;border:1px solid #b7eb8f;background:#f6ffed;border-radius:2px;color:#52c41a;font-size:12px;line-height:22px;text-align:center">正常</div>
<svg class="abs" style="left:971px;top:722.0px" width="14" height="14" viewBox="0 0 14 14" fill="none" stroke="#1890ff" stroke-width="1.1"><path d="M7.2 2.5 H1.5 V12.5 H11.5 V7"/><path d="M4.5 9.6 L4.9 7.3 L11.3 0.9 A1.3 1.3 0 0 1 13.1 2.7 L6.7 9.1 Z" stroke-linejoin="round"/></svg>
<div class="abs" style="left:996px;top:721.0px;width:1px;height:12px;background:#dde3e8"></div>
<svg class="abs" style="left:1009px;top:722.0px" width="12" height="14" viewBox="0 0 12 14" fill="none" stroke="#ed6f6f" stroke-width="1.1"><path d="M0.3 3.6 H11.7" stroke-width="1.4"/><path d="M3.1 3.4 V1.5 H8.9 V3.4 M1.6 3.8 L2.3 12.6 H9.7 L10.4 3.8"/></svg>
<div class="abs" style="left:251px;top:769.0px;width:16px;height:16px;border:1px solid #d9d9d9;border-radius:50%;background:#fff"></div>
<div class="abs" style="left:282.0px;top:768.0px;width:200px;text-align:center;font-size:14px;line-height:22px;color:#141414;white-space:nowrap;">是否缓存</div>
<div class="abs" style="left:479.5px;top:768.0px;width:200px;text-align:center;font-size:14px;line-height:22px;color:#141414;white-space:nowrap;letter-spacing:-.45px">sys_keepalive</div>
<div class="abs" style="left:699.0px;top:768.0px;width:40px;height:22px;border:1px solid #b7eb8f;background:#f6ffed;border-radius:2px;color:#52c41a;font-size:12px;line-height:22px;text-align:center">正常</div>
<svg class="abs" style="left:971px;top:772.0px" width="14" height="14" viewBox="0 0 14 14" fill="none" stroke="#1890ff" stroke-width="1.1"><path d="M7.2 2.5 H1.5 V12.5 H11.5 V7"/><path d="M4.5 9.6 L4.9 7.3 L11.3 0.9 A1.3 1.3 0 0 1 13.1 2.7 L6.7 9.1 Z" stroke-linejoin="round"/></svg>
<div class="abs" style="left:996px;top:771.0px;width:1px;height:12px;background:#dde3e8"></div>
<svg class="abs" style="left:1009px;top:772.0px" width="12" height="14" viewBox="0 0 12 14" fill="none" stroke="#ed6f6f" stroke-width="1.1"><path d="M0.3 3.6 H11.7" stroke-width="1.4"/><path d="M3.1 3.4 V1.5 H8.9 V3.4 M1.6 3.8 L2.3 12.6 H9.7 L10.4 3.8"/></svg>
<div class="abs" style="left:663px;top:890px;font-size:14px;line-height:22px;color:#141414;white-space:nowrap;">共 14 条数据</div>
<div class="abs" style="left:754px;top:889px;width:24px;height:24px;background:#1890ff;border-radius:2px;color:#fff;text-align:center;line-height:24px;font-weight:bold">1</div>
<div class="abs" style="left:786px;top:889px;width:24px;height:24px;background:#f5f5f5;border-radius:2px;color:#595959;text-align:center;line-height:24px">2</div>
<div class="abs" style="left:818px;top:889px;width:24px;height:24px;background:#f5f5f5;border-radius:2px"><svg class="abs" style="left:8px;top:7px" width="8" height="10" viewBox="0 0 8 10" fill="none" stroke="#262626" stroke-width="1"><path d="M1.5 0.8 L6 5 L1.5 9.2"/></svg></div>
<div class="abs" style="left:848px;top:889px;width:90px;height:24px;border:1px solid #d9d9d9;border-radius:2px;background:#fff"><span class="abs" style="left:8px;top:0;line-height:22px;color:#141414">10 条/页</span><svg class="abs" style="left:68px;top:9px" width="10" height="6" viewBox="0 0 10 6" fill="none" stroke="#bfbfbf" stroke-width="1"><path d="M0.5 0.5 L5 5 L9.5 0.5"/></svg></div>
<div class="abs" style="left:945px;top:890px;font-size:14px;line-height:22px;color:#141414;white-space:nowrap;">跳至</div>
<div class="abs" style="left:980px;top:889px;width:44px;height:24px;border:1px solid #d9d9d9;border-radius:2px;background:#fff"></div>
<div class="abs" style="left:1029px;top:890px;font-size:14px;line-height:22px;color:#141414;white-space:nowrap;">页</div>
<div class="card" style="left:1066px;top:96px;width:854px;height:823px"></div>
<div class="abs" style="left:1078px;top:108px;font-size:16px;line-height:22px;color:#141414;white-space:nowrap;">字典项列表</div>
<svg class="abs" style="left:1165px;top:111px" width="14" height="14" viewBox="0 0 14 14" fill="none" stroke="#8c8c8c" stroke-width="1.1"><circle cx="7" cy="7" r="6.2"/><path d="M7 6 V10.5" stroke-width="1.3"/><circle cx="7" cy="3.9" r=".5" fill="#8c8c8c"/></svg>
<div class="btn" style="left:1618px;top:102px;width:82px;background:#1890ff;color:#fff;box-shadow:0 2px 0 rgba(0,0,0,.045)"><svg class="abs" style="left:17px;top:10px" width="12" height="12" viewBox="0 0 12 12" stroke="#fff" stroke-width="1.2"><path d="M6 0.5 V11.5 M0.5 6 H11.5"/></svg><span class="tx" style="left:38px;top:0px">新增</span></div>
<div class="btn" style="left:1708px;top:102px;width:82px;background:#efbd47;color:#fff;box-shadow:0 2px 0 rgba(0,0,0,.045)"><svg class="abs" style="left:17px;top:10px" width="12" height="12" viewBox="0 0 12 12" fill="none" stroke="#fff" stroke-width="1.1"><path d="M6 1 V8.4 M4.8 7.2 L6 8.4 L7.2 7.2 M1.2 7.6 V10.8 H10.8 V7.6"/></svg><span class="tx" style="left:38px;top:0px">导出</span></div>
<div class="abs" style="left:1806px;top:111px;width:1px;height:11px;background:#e8e8e8"></div>
<svg class="abs" style="left:1816px;top:110px" width="16" height="16" viewBox="0 0 16 16" fill="none" stroke="#262626" stroke-width="1.4"><path d="M2.9 13.1 A7.2 7.2 0 1 1 12.8 13.3"/><path d="M10.2 15.3 L13.7 15.3 L13.7 11.7 Z" fill="#262626" stroke-width="0.6" stroke-linejoin="miter"/></svg>
<svg class="abs" style="left:1848px;top:110px" width="15" height="16" viewBox="0 0 15 16" fill="none" stroke="#262626" stroke-width="1.3"><path d="M0.6 0.9 H14.4 M0.6 15.1 H14.4 M7.5 3 V13"/><path d="M5.6 4.8 L7.5 2.7 L9.4 4.8 Z M5.6 11.2 L7.5 13.3 L9.4 11.2 Z" fill="#262626" stroke-width="0.7"/></svg>
<svg class="abs" style="left:1874px;top:107px" width="21" height="21" viewBox="0 0 24 24" fill="none" stroke="#262626" stroke-width="1.45" stroke-linejoin="round"><path d="M8.20 5.42 L9.45 4.84 L9.90 2.22 L14.10 2.22 L14.55 4.84 L15.80 5.42 L16.93 6.21 L19.42 5.29 L21.52 8.93 L19.47 10.63 L19.60 12.00 L19.47 13.37 L21.52 15.07 L19.42 18.71 L16.93 17.79 L15.80 18.58 L14.55 19.16 L14.10 21.78 L9.90 21.78 L9.45 19.16 L8.20 18.58 L7.07 17.79 L4.58 18.71 L2.48 15.07 L4.53 13.37 L4.40 12.00 L4.53 10.63 L2.48 8.93 L4.58 5.29 L7.07 6.21Z"/><circle cx="12" cy="12" r="3.9"/></svg>
<div class="abs" style="left:1072px;top:142px;width:842px;height:47px;background:#fafafa"></div>
<div class="abs" style="left:1072px;top:189px;width:834px;height:49px;background:#fff"></div>
<div class="abs" style="left:1072px;top:238px;width:834px;height:49px;background:#fafafa"></div>
<div class="abs" style="left:1906px;top:189px;width:8px;height:690px;background:#f1f1f1"></div>
<div class="abs" style="left:1072px;top:142px;width:842px;height:1px;background:#f0f0f0"></div>
<div class="abs" style="left:1072px;top:189px;width:842px;height:1px;background:#f0f0f0"></div>
<div class="abs" style="left:1072px;top:238px;width:834px;height:1px;background:#f0f0f0"></div>
<div class="abs" style="left:1072px;top:287px;width:834px;height:1px;background:#f0f0f0"></div>
<div class="abs" style="left:1072px;top:142px;width:1px;height:736px;background:#f0f0f0"></div>
<div class="abs" style="left:1192px;top:142px;width:1px;height:145px;background:#f0f0f0"></div>
<div class="abs" style="left:1312px;top:142px;width:1px;height:145px;background:#f0f0f0"></div>
<div class="abs" style="left:1392px;top:142px;width:1px;height:145px;background:#f0f0f0"></div>
<div class="abs" style="left:1472px;top:142px;width:1px;height:145px;background:#f0f0f0"></div>
<div class="abs" style="left:1826px;top:142px;width:1px;height:145px;background:#f0f0f0"></div>
<div class="abs" style="left:1906px;top:142px;width:1px;height:145px;background:#f0f0f0"></div>
<div class="abs" style="left:1913px;top:142px;width:1px;height:47px;background:#f0f0f0"></div>
<div class="abs" style="left:1032.0px;top:155.0px;width:200px;text-align:center;font-size:14px;line-height:22px;color:#141414;white-space:nowrap;">字典项名称</div>
<div class="abs" style="left:1152.0px;top:155.0px;width:200px;text-align:center;font-size:14px;line-height:22px;color:#141414;white-space:nowrap;">字典项编码</div>
<div class="abs" style="left:1252.0px;top:155.0px;width:200px;text-align:center;font-size:14px;line-height:22px;color:#141414;white-space:nowrap;">排序</div>
<div class="abs" style="left:1332.0px;top:155.0px;width:200px;text-align:center;font-size:14px;line-height:22px;color:#141414;white-space:nowrap;">状态</div>
<div class="abs" style="left:1549.0px;top:155.0px;width:200px;text-align:center;font-size:14px;line-height:22px;color:#141414;white-space:nowrap;">备注</div>
<div class="abs" style="left:1766.0px;top:155.0px;width:200px;text-align:center;font-size:14px;line-height:22px;color:#141414;white-space:nowrap;">操作</div>
<div class="abs" style="left:1032.0px;top:202.5px;width:200px;text-align:center;font-size:14px;line-height:22px;color:#141414;white-space:nowrap;">显示</div>
<div class="abs" style="left:1152.0px;top:202.5px;width:200px;text-align:center;font-size:14px;line-height:22px;color:#141414;white-space:nowrap;">0</div>
<div class="abs" style="left:1252.0px;top:202.5px;width:200px;text-align:center;font-size:14px;line-height:22px;color:#141414;white-space:nowrap;">1</div>
<div class="abs" style="left:1412.0px;top:203.5px;width:40px;height:22px;border:1px solid #b7eb8f;background:#f6ffed;border-radius:2px;color:#52c41a;font-size:12px;line-height:22px;text-align:center">正常</div>
<svg class="abs" style="left:1841px;top:207px" width="14" height="14" viewBox="0 0 14 14" fill="none" stroke="#1890ff" stroke-width="1.1"><path d="M7.2 2.5 H1.5 V12.5 H11.5 V7"/><path d="M4.5 9.6 L4.9 7.3 L11.3 0.9 A1.3 1.3 0 0 1 13.1 2.7 L6.7 9.1 Z" stroke-linejoin="round"/></svg>
<div class="abs" style="left:1866px;top:207px;width:1px;height:12px;background:#dde3e8"></div>
<svg class="abs" style="left:1879px;top:207px" width="12" height="14" viewBox="0 0 12 14" fill="none" stroke="#ed6f6f" stroke-width="1.1"><path d="M0.3 3.6 H11.7" stroke-width="1.4"/><path d="M3.1 3.4 V1.5 H8.9 V3.4 M1.6 3.8 L2.3 12.6 H9.7 L10.4 3.8"/></svg>
<div class="abs" style="left:1032.0px;top:251.5px;width:200px;text-align:center;font-size:14px;line-height:22px;color:#141414;white-space:nowrap;">隐藏</div>
<div class="abs" style="left:1152.0px;top:251.5px;width:200px;text-align:center;font-size:14px;line-height:22px;color:#141414;white-space:nowrap;">1</div>
<div class="abs" style="left:1252.0px;top:251.5px;width:200px;text-align:center;font-size:14px;line-height:22px;color:#141414;white-space:nowrap;">2</div>
<div class="abs" style="left:1412.0px;top:252.5px;width:40px;height:22px;border:1px solid #b7eb8f;background:#f6ffed;border-radius:2px;color:#52c41a;font-size:12px;line-height:22px;text-align:center">正常</div>
<svg class="abs" style="left:1841px;top:256px" width="14" height="14" viewBox="0 0 14 14" fill="none" stroke="#1890ff" stroke-width="1.1"><path d="M7.2 2.5 H1.5 V12.5 H11.5 V7"/><path d="M4.5 9.6 L4.9 7.3 L11.3 0.9 A1.3 1.3 0 0 1 13.1 2.7 L6.7 9.1 Z" stroke-linejoin="round"/></svg>
<div class="abs" style="left:1866px;top:256px;width:1px;height:12px;background:#dde3e8"></div>
<svg class="abs" style="left:1879px;top:256px" width="12" height="14" viewBox="0 0 12 14" fill="none" stroke="#ed6f6f" stroke-width="1.1"><path d="M0.3 3.6 H11.7" stroke-width="1.4"/><path d="M3.1 3.4 V1.5 H8.9 V3.4 M1.6 3.8 L2.3 12.6 H9.7 L10.4 3.8"/></svg>
<div class="abs" style="left:1711px;top:890px;font-size:14px;line-height:22px;color:#141414;white-space:nowrap;">共 2 条数据</div>
<div class="abs" style="left:1795px;top:889px;width:24px;height:24px;background:#1890ff;border-radius:2px;color:#fff;text-align:center;line-height:24px;font-weight:bold">1</div>
<div class="abs" style="left:1825px;top:889px;width:89px;height:24px;border:1px solid #d9d9d9;border-radius:2px;background:#fff"><span class="abs" style="left:8px;top:0;line-height:22px;color:#141414">10 条/页</span><svg class="abs" style="left:67px;top:9px" width="10" height="6" viewBox="0 0 10 6" fill="none" stroke="#bfbfbf" stroke-width="1"><path d="M0.5 0.5 L5 5 L9.5 0.5"/></svg></div><!--/CARDS-->
</body></html>
